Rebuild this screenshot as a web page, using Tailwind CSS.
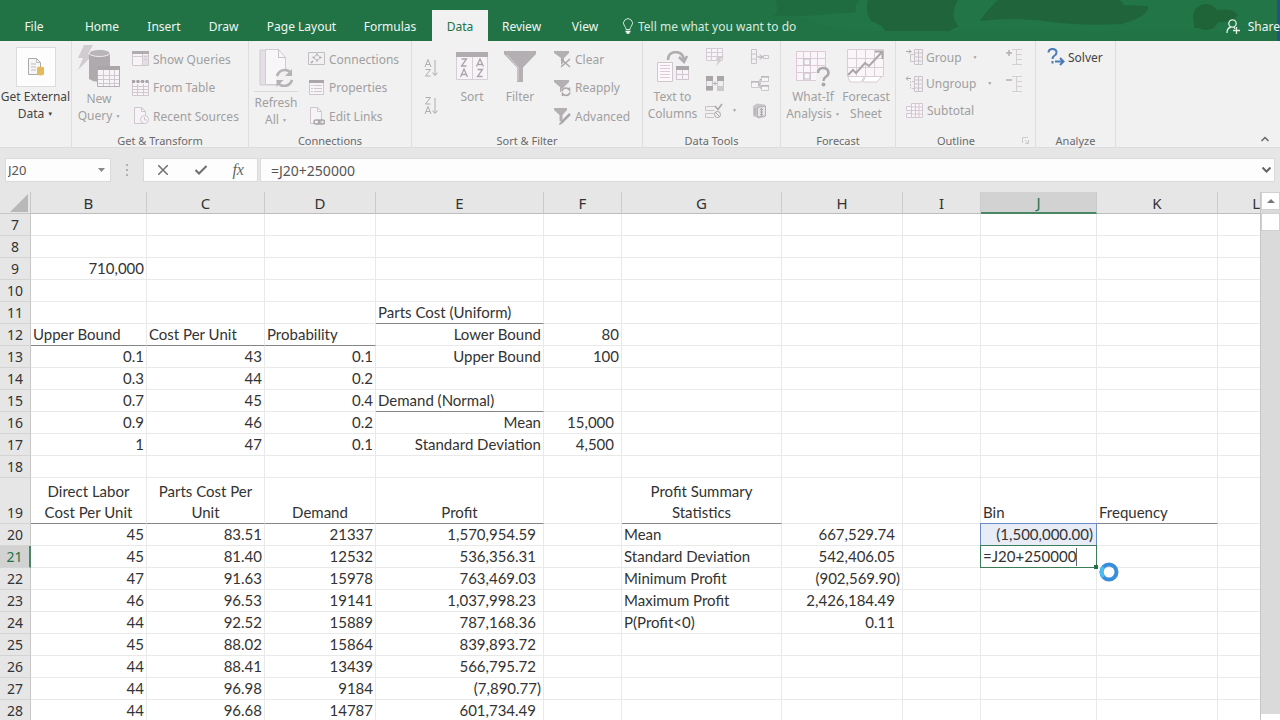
<!DOCTYPE html>
<html lang="en">
<head>
    <meta charset="UTF-8">
    <meta name="viewport" content="width=device-width, initial-scale=1.0">
    <title>Profit Simulation - Excel</title>
    <script src="https://cdn.jsdelivr.net/npm/@tailwindcss/browser@4"></script>
    <style>
        body { font-family: 'Noto Sans', sans-serif; }
        .sheet td { font-family: Lato, sans-serif; }
    </style>
</head>
<body class="h-screen overflow-hidden flex flex-col bg-[#e6e6e6] text-[#444]">

    <!-- Tab strip -->
    <header class="relative h-[41px] shrink-0 bg-[#217346] text-[#f0f6f2] text-xs">
        <svg class="absolute top-0 right-0 h-[41px] w-[520px]" viewBox="0 0 520 41">
            <path d="M20 0h497v31H90Q30 20 20 0z" fill="#227547"/>
            <path d="M15 0h85q-6 6-4 12-8 2-18 1-30 4-64 3 6-6 1-16z" fill="#206c41"/>
            <path d="M108 0h90l-3 6q-4 14 4 20l-10 5h-64q-2-6-14-10-6-8-3-21z" fill="#1f643b"/>
            <path d="M238 0h122l4 5 24 1q2 10-26 18-32 2-62-1-40-7-80-2 6-10 18-21z" fill="#1f643b"/>
            <circle cx="446" cy="17" r="13" fill="#1f6439"/>
            <path d="M458 10q14-2 20 5l-6 7h-14zM434 20h8v8h-8z" fill="#1f6439"/>
            <path d="M517 0h3v41h-3z" fill="#24508c"/>
        </svg>
        <nav class="relative flex h-full items-end leading-[31px]">
            <button class="w-[68px] h-[31px] pt-px">File</button>
            <button class="w-[68px] h-[31px] pt-px">Home</button>
            <button class="w-14 h-[31px] pt-px">Insert</button>
            <button class="w-[63px] h-[31px] pt-px">Draw</button>
            <button class="w-[93px] h-[31px] pt-px">Page Layout</button>
            <button class="w-[84px] h-[31px] pt-px">Formulas</button>
            <button class="w-[56px] h-[31px] pt-px bg-[#f1f1f1] text-[#217346]">Data</button>
            <button class="w-[67px] h-[31px] pt-px">Review</button>
            <button class="w-[60px] h-[31px] pt-px">View</button>
            <button class="h-[31px] pl-[7px] pt-px flex items-center gap-1 text-[#d6ebde]">
                <svg class="w-3 h-4" viewBox="0 0 12 16" fill="none" stroke="#cfe5d8"><path d="M4 11.500q0-2-1.500-3.500a4.500 4.500 0 1 1 7 0Q8 9.500 8 11.500z"/><path d="M3.500 13.500h5M4.500 15h3" stroke="#fff" stroke-width="1.500"/></svg>
                Tell me what you want to do
            </button>
            <button class="h-[31px] ml-auto pt-px flex items-center gap-2 whitespace-nowrap">
                <svg class="w-[14px] h-[15px]" viewBox="0 0 14 15" fill="none" stroke="#e4f0e9" stroke-width="1.300"><circle cx="6.500" cy="4.500" r="3.700"/><path d="M1 14q0-5 4-6M8 8l1 2M7 11.500h7M10.500 8v7"/></svg>
                Share
            </button>
        </nav>
    </header>

    <!-- Ribbon -->
    <section class="h-[107px] shrink-0 bg-[#f1f1f1] flex text-xs leading-[17px] text-[#a0a0a0] border-b border-[#dcdcdc]">
        <div class="w-[72px] border-r border-[#e0dde0] flex flex-col">
            <button class="text-[#444] whitespace-nowrap pt-1.5 flex flex-col items-center">
                <span class="w-10 h-10 bg-[#fdfdfd] border border-[#dcdcdc] flex items-center justify-center">
                    <svg class="w-4 h-[18px]" viewBox="0 0 16 18"><path d="M.5.500h8l4 4v12H.5z" fill="#f6f6f6" stroke="#aaa"/><path d="M8.500.500v4h4M3 6h5M3 9h5M3 12h5" fill="none" stroke="#bbb"/><path d="M9 9.500q3.500-2 7 0v7q-3.500 2-7 0z" fill="#e6b95f"/></svg>
                </span>
                <span class="pt-px">Get External<br>Data <small class="text-[6px] align-middle">▼</small></span>
            </button>
        </div>

        <div class="w-[177px] border-r border-[#e0dde0] flex flex-col">
            <div class="flex h-[92px] pl-1">
                <button class="w-[46px] flex flex-col items-center pt-1">
                    <svg class="w-[42px] h-[42px]" viewBox="0 0 42 42">
                        <path d="M6 0h9l-5 9h6L0 25l5-12H0z" fill="#d0ccd0"/>
                        <path d="M11 8v26q4 3 12 3V21h9V8z" fill="#aeaaae"/>
                        <ellipse cx="21.500" cy="8" rx="10.500" ry="3.500" fill="#b8b4b8" stroke="#efefef"/>
                        <path d="M19.500 21.500h22v20h-22z" fill="#f7f4f7" stroke="#b5b0b5"/><path d="M19 21h23v4H19z" fill="#aaa6aa"/><path d="M20 30.500h21M20 34.500h21M20 38.500h21M25.500 25v16M31.500 25v16M36.500 25v16" stroke="#cfc6ce"/>
                    </svg>
                    <span class="pt-[3px]">New<br>Query&nbsp;<small class="text-[5px] align-middle">▼</small></span>
                </button>
                <div class="flex flex-col pl-[10px] pt-1 whitespace-nowrap">
                    <button class="h-7 flex items-center gap-1">
                        <svg class="w-[17px] h-4" viewBox="0 0 17 16"><path d="M.5.500h16v14H.5z" fill="#f7f4f7" stroke="#cfc6ce"/><path d="M0 0h17v3H0z" fill="#b0acb0"/><path d="M11 4h5v10h-5z" fill="#e4dfe4"/><path d="M12 5.500h3M12 8.500h3M10.500 3v11M1 5.500h9" stroke="#d3cad2"/></svg>
                        Show Queries
                    </button>
                    <button class="h-[29px] flex items-center gap-1">
                        <svg class="w-[17px] h-4" viewBox="0 0 17 16"><path d="M.5 1.500h16v14H.5z" fill="#f7f4f7" stroke="#cfc6ce"/><path d="M0 1.500h17" stroke="#aaa6aa" stroke-width="3" stroke-dasharray="3 1.500"/><path d="M1 6.500h15M1 9.500h15M1 12.500h15M5.500 4v11M11.500 4v11" stroke="#cfc6ce"/></svg>
                        From Table
                    </button>
                    <button class="h-7 flex items-center gap-1">
                        <svg class="w-[17px] h-[18px]" viewBox="0 0 17 18" fill="#f7f4f7" stroke="#cfc6ce"><path d="M2.500.500h7l4 4v12h-11zM9.500.500v4h4"/><circle cx="12.500" cy="12.500" r="4"/><path d="M12.500 10v3h2.500" fill="none"/></svg>
                        Recent Sources
                    </button>
                </div>
            </div>
            <div class="h-3.5 text-center text-[11px] leading-[15px] text-[#6a6a6a]">Get &amp; Transform</div>
        </div>

        <div class="w-[163px] border-r border-[#e0dde0] flex flex-col">
            <div class="flex h-[92px] pl-1">
                <button class="w-[46px] flex flex-col items-center pt-2">
                    <svg class="w-[34px] h-[38px]" viewBox="0 0 34 38">
                        <path d="M1 1h18v35H1z" fill="#e4dfe4" stroke="#d3cad2"/><path d="M6.500.500h13l7 8v27h-20z" fill="#f8f6f8" stroke="#d3cad2"/><path d="M19.500.500v8h7" fill="none" stroke="#c9c0c8"/>
                        <circle cx="25.500" cy="29" r="9" fill="#f1f1f1"/>
                        <path d="M18 27q2-6 8-6 4 0 6 3.500M33 31q-2 6-8 6-4 0-6-3.500" fill="none" stroke="#b5b1b5" stroke-width="2.500"/><path d="M33 20v7h-7zM17.500 38v-7h7z" fill="#b5b1b5"/>
                    </svg>
                    <span class="mt-1 border-t border-[#dcd8dc] pt-0.5">Refresh<br>All <small class="text-[5px] align-middle">▼</small></span>
                </button>
                <div class="flex flex-col pl-[9px] pt-1 whitespace-nowrap">
                    <button class="h-7 flex items-center gap-1">
                        <svg class="w-[17px] h-4" viewBox="0 0 17 16" fill="none" stroke="#c4bdc3"><path d="M.5 1.500h16v12H.5z"/><circle cx="9" cy="6.500" r="2.500"/><path d="M9 2.500V4M9 9v1.500M4.500 6.500h2M11.500 6.500h2M3 12l2-2" stroke="#aaa6aa" stroke-width="1.500"/></svg>
                        Connections
                    </button>
                    <button class="h-[29px] flex items-center gap-1">
                        <svg class="w-[17px] h-4" viewBox="0 0 17 16"><path d="M1.500.500h14v14h-14z" fill="#f7f4f7" stroke="#cfc6ce"/><path d="M1 0h15v3H1z" fill="#aaa6aa"/><path d="M3 5.500h2M6 5.500h8M3 8.500h2M6 8.500h8M3 11.500h2M6 11.500h8" stroke="#cfc6ce"/></svg>
                        Properties
                    </button>
                    <button class="h-7 flex items-center gap-1">
                        <svg class="w-[17px] h-[18px]" viewBox="0 0 17 18" fill="none" stroke="#cfc6ce"><path d="M2.500.500h7l4 4v12h-11z" fill="#f7f4f7"/><path d="M9.500.500v4h4"/><g stroke="#aaa6aa" stroke-width="1.500"><rect x="6" y="13" width="6" height="4" rx="2"/><rect x="10.500" y="13" width="6" height="4" rx="2"/></g></svg>
                        Edit Links
                    </button>
                </div>
            </div>
            <div class="h-3.5 text-center text-[11px] leading-[15px] text-[#6a6a6a]">Connections</div>
        </div>

        <div class="w-[231px] border-r border-[#e0dde0] flex flex-col">
            <div class="flex h-[92px] pl-2.5">
                <div class="w-[18px] flex flex-col items-center pt-[18px] gap-5">
                    <button aria-label="Sort A to Z"><svg class="w-[14px] h-[18px]" viewBox="0 0 14 18" fill="none" stroke="#b0acb0"><path d="M1 8l3-7.500L7 8M2 5.500h4M1.500 10.500h5l-5 6.500h5M11 1v15M8.500 13.500l2.500 3 2.500-3"/></svg></button>
                    <button aria-label="Sort Z to A"><svg class="w-[14px] h-[18px]" viewBox="0 0 14 18" fill="none" stroke="#b0acb0"><path d="M1.500.500h5l-5 6.500h5M1 17l3-7.500L7 17M2 14.500h4M11 1v15M8.500 13.500l2.500 3 2.500-3"/></svg></button>
                </div>
                <button class="w-[48px] ml-2 flex flex-col items-center pt-2.5">
                    <svg class="w-8 h-8" viewBox="0 0 32 32"><path d="M.5 1.500h31v27H.5z" fill="#f7f4f7" stroke="#d6cdd5"/><path d="M0 1h32v5H0z" fill="#b0acb0"/><path d="M16.500 6v22" stroke="#d6cdd5"/><path d="M5.500 8h5l-5 7h5M4.500 26l3.500-8 3.500 8M6 23.500h4.500M20.500 15.500L24 8l3.500 7.500M22 13.500h4.500M21.500 18.500h5l-5 7h5" fill="none" stroke="#aaa4aa" stroke-width="1.300"/></svg>
                    <span class="pt-[5px]">Sort</span>
                </button>
                <button class="w-[48px] flex flex-col items-center pt-2.5">
                    <svg class="w-8 h-8" viewBox="0 0 32 32"><path d="M0 0h32v3L19 16.500V31h-6V16.500L0 3z" fill="#b3afb3"/><path d="M3 4l11 12v14" fill="none" stroke="#d5d2d5"/></svg>
                    <span class="pt-[5px]">Filter</span>
                </button>
                <div class="flex flex-col pl-[10px] pt-1 whitespace-nowrap">
                    <button class="h-7 flex items-center gap-1">
                        <svg class="w-[17px] h-[18px]" viewBox="0 0 17 18"><path d="M0 1h15v2l-5 5v4l-3 3V8L0 3z" fill="#b3afb3"/><path d="M7 9l9 8M16 9l-9 8" stroke="#aaa6aa" stroke-width="1.500"/></svg>
                        Clear
                    </button>
                    <button class="h-[29px] flex items-center gap-1">
                        <svg class="w-[17px] h-[18px]" viewBox="0 0 17 18"><path d="M0 1h15v2l-5 5v5H6V8L0 3z" fill="#b3afb3"/><circle cx="12" cy="13" r="5" fill="#f1f1f1"/><path d="M8 12q1-3 4-3 2 0 3.500 2V8.500M16 13.500q-1 3-4 3-2 0-3.500-2V17" fill="none" stroke="#aaa6aa" stroke-width="1.500"/></svg>
                        Reapply
                    </button>
                    <button class="h-7 flex items-center gap-1">
                        <svg class="w-[17px] h-[18px]" viewBox="0 0 17 18"><path d="M0 1h13v2L8.500 8v6h-3V8L0 3z" fill="#b3afb3"/><path d="M16 7l-9 9" stroke="#aaa6aa" stroke-width="2.500"/><path d="M5 18l1-3 2 2z" fill="#aaa6aa"/></svg>
                        Advanced
                    </button>
                </div>
            </div>
            <div class="h-3.5 text-center text-[11px] leading-[15px] text-[#6a6a6a]">Sort &amp; Filter</div>
        </div>

        <div class="w-[138px] border-r border-[#e0dde0] flex flex-col">
            <div class="flex h-[92px]">
                <button class="w-[59px] flex flex-col items-center pt-2.5">
                    <svg class="w-8 h-8" viewBox="0 0 32 32"><path d="M11 9q0-7 7-8 8 0 9 8M22 6l5 5 3-6" fill="none" stroke="#b0acb0" stroke-width="2.500"/><path d="M.5 11.500h15v19H.5z" fill="#fbf7fa" stroke="#cfc6ce"/><path d="M3 14.500h10M3 17.500h10M3 20.500h10M3 23.500h10M3 26.500h10" stroke="#dccbd7"/><path d="M19.500 15.500h12v13h-12z" fill="#f7f4f7" stroke="#cfc6ce"/><path d="M19 15h13v4H19z" fill="#aaa6aa"/><path d="M20 23.500h11M25.500 19v9" stroke="#cfc6ce"/></svg>
                    <span class="pt-[5px]">Text to<br>Columns</span>
                </button>
                <div class="flex flex-col pl-[3px] pt-0.5">
                    <button aria-label="Flash Fill" class="h-[27px] w-9 flex items-center pl-px"><svg class="w-[18px] h-[18px]" viewBox="0 0 18 18"><path d="M.5.500h16v12H.5zM.5 4.500h16M.5 8.500h16M5.500.500v12M11.500.500v12" fill="#f7f4f7" stroke="#d6cbd4"/><path d="M11 8h7l-4 4h2l-6 6 2-5h-2z" fill="#d0ccd0"/></svg></button>
                    <button aria-label="Remove Duplicates" class="h-[27px] w-9 flex items-center pl-px"><svg class="w-[18px] h-[16px]" viewBox="0 0 18 16"><path d="M.5.500h6v14h-6zM11.500.500h6v14h-6z" fill="#eee" stroke="#c9c5c9"/><path d="M0 0h7v5H0zM0 10h7v4H0zM11 0h7v5h-7z" fill="#a9a5a9"/><path d="M7 7.500h4M9 5.500v4" stroke="#b0acb0"/><path d="M11 10h7v4h-7z" fill="#ccc8cc"/></svg></button>
                    <button aria-label="Data Validation" class="h-[27px] w-9 flex items-center gap-[9px]"><svg class="w-[18px] h-[16px]" viewBox="0 0 18 16" fill="none" stroke="#c9c4c9"><path d="M10 3.500H.5v4h9M9 10.500H.5v4H9"/><path d="M10 3l3 3.500L17 1" stroke="#aaa6aa" stroke-width="1.500"/><circle cx="12.500" cy="11.500" r="3" stroke="#aaa6aa"/><path d="M10.500 9.500l4 4" stroke="#aaa6aa"/></svg><small class="text-[5px]">▼</small></button>
                </div>
                <div class="flex flex-col pl-[10px] pt-0.5">
                    <button aria-label="Consolidate" class="h-[27px] flex items-center"><svg class="w-[18px] h-[16px]" viewBox="0 0 18 16" fill="none" stroke="#c9c4c9"><path d="M.5.500h5v14h-5zM.5 5h5M.5 10h5M12.500 6.500h5v3h-5z"/><path d="M6.500 8h5M9 5.500L11.500 8 9 10.500" stroke="#aaa6aa"/></svg></button>
                    <button aria-label="Relationships" class="h-[27px] flex items-center"><svg class="w-[18px] h-[16px]" viewBox="0 0 18 16" fill="#f7f4f7" stroke="#cdc8cd"><path d="M.5 5.500h7v6h-7zM10.500.500h7v5h-7zM10.500 9.500h7v5h-7z"/><path d="M0 6h8M10 1h8M10 10h8M7.500 8.500H9v-5h1M9 8.500V12h1" stroke="#aba7ab"/></svg></button>
                    <button aria-label="Manage Data Model" class="h-[27px] flex items-center"><svg class="w-[18px] h-[16px]" viewBox="0 0 18 16"><path d="M2 3l4-2.500 8 1V14l-6 1.500L2 13z" fill="#c9c5c9"/><path d="M6.500 4.500l8-1.500v10l-8 1z" fill="#e8e6e8" stroke="#b3afb3"/><path d="M9 6.500h3M9 9h3M9 11.500h3M10.500 5v8M4 5v7" stroke="#aaa6aa"/></svg></button>
                </div>
            </div>
            <div class="h-3.5 text-center text-[11px] leading-[15px] text-[#6a6a6a]">Data Tools</div>
        </div>

        <div class="w-[115px] border-r border-[#e0dde0] flex flex-col">
            <div class="flex h-[92px] whitespace-nowrap">
                <button class="w-[64px] flex flex-col items-center pt-2.5">
                    <svg class="w-[34px] h-9" viewBox="0 0 34 36"><path d="M.5.500h29v29H.5zM.5 7.500h29M.5 14.500h29M.5 21.500h29M7.500.500v29M14.500.500v29M21.500.500v29" fill="#f9f5f8" stroke="#dccbd7"/><path d="M8 8h6v6H8zM8 22h6v6H8z" fill="none" stroke="#c4bdc3"/><path d="M20 17h14v19H20z" fill="#f1f1f1"/><path d="M22 22q0-5 5-5t5.500 4.500q0 3-3 4.500-2 1.500-2 4" fill="none" stroke="#aaa6aa" stroke-width="2.500"/><circle cx="27.500" cy="33.500" r="2" fill="#aaa6aa"/></svg>
                    <span class="pt-px">What-If<br>Analysis&nbsp;<small class="text-[5px] align-middle">▼</small></span>
                </button>
                <button class="w-[42px] flex flex-col items-center pt-2">
                    <svg class="w-[38px] h-[34px]" viewBox="0 0 38 34"><path d="M.5.500h36v27H.5zM.5 9.500h36M.5 18.500h36M9.500.500v27M18.500.500v27M27.500.500v27" fill="#f9f5f8" stroke="#d8ced6"/><path d="M1 26l5-5 3 3 9-10 4 3L35 3M28 2.500h7.500V10" fill="none" stroke="#aaa6aa" stroke-width="2"/><path d="M1 28l2 5h11l3-5M18 28l-2 5h14l4-5" fill="#fff" stroke="#d6cdd5"/></svg>
                    <span class="pt-[5px]">Forecast<br>Sheet</span>
                </button>
            </div>
            <div class="h-3.5 text-center text-[11px] leading-[15px] text-[#6a6a6a]">Forecast</div>
        </div>

        <div class="w-[140px] border-r border-[#e0dde0] flex flex-col">
            <div class="flex justify-between h-[92px] pl-2.5 pr-3 pt-[3px] whitespace-nowrap">
                <div class="flex flex-col">
                    <button class="h-[26px] flex items-center gap-[3px]">
                        <svg class="w-[17px] h-[16px]" viewBox="0 0 17 16" fill="none" stroke="#cbc5cb"><path d="M8.500.500h8v15h-8zM12.500.500v15M8.500 4h8M8.500 8h8M8.500 12h8M8 5.500H4.500v7H8"/><path d="M0 2.500h5M3 .500l2 2-2 2" stroke="#aaa6aa"/></svg>
                        Group <small class="text-[5px] pl-2">▼</small>
                    </button>
                    <button class="h-[27px] flex items-center gap-[3px]">
                        <svg class="w-[17px] h-[16px]" viewBox="0 0 17 16" fill="none" stroke="#cbc5cb"><path d="M8.500.500h8v15h-8zM12.500.500v15M8.500 4h8M8.500 8h8M8.500 12h8"/><path d="M8 5.500H4.500v7H8" stroke-dasharray="2 1"/><path d="M0 2.500h5M2 .500l-2 2 2 2" stroke="#aaa6aa"/></svg>
                        Ungroup <small class="text-[5px] pl-2">▼</small>
                    </button>
                    <button class="h-[27px] flex items-center gap-1">
                        <svg class="w-[17px] h-[16px]" viewBox="0 0 17 16" fill="#f9f5f8" stroke="#d3c8d1"><path d="M5.500.500h11v14h-11zM9.500.500v14M13 .500v14M5.500 4h11M5.500 7.500h11M5.500 11h11M5 3.500H.5v4H5M5 10.500H.5v4H5"/></svg>
                        Subtotal
                    </button>
                </div>
                <div class="flex flex-col">
                    <button aria-label="Show Detail" class="h-[26px] flex items-center"><svg class="w-[17px] h-[16px]" viewBox="0 0 17 16" fill="none" stroke="#d3cfd3"><path d="M6 .500h10M10 5.500h6M10 10.500h6M6 15.500h10M10.500.500v15"/><path d="M0 4h6M3 1v6" stroke="#b3afb3" stroke-width="1.500"/></svg></button>
                    <button aria-label="Hide Detail" class="h-[27px] flex items-center"><svg class="w-[17px] h-[16px]" viewBox="0 0 17 16" fill="none" stroke="#d3cfd3"><path d="M6 .500h10M10 5.500h6M10 10.500h6M6 15.500h10M10.500.500v15"/><path d="M0 4h6" stroke="#b3afb3" stroke-width="1.500"/></svg></button>
                </div>
            </div>
            <div class="h-3.5 flex items-center text-[11px] leading-[15px] text-[#6a6a6a]">
                <span class="w-[120px] text-center">Outline</span>
                <button aria-label="Outline settings" class="ml-1.5"><svg class="w-[7px] h-[7px]" viewBox="0 0 7 7" fill="none" stroke="#ccc"><path d="M.5 6V.500H6M3 3l3 3M6.500 3v3.500H3"/></svg></button>
            </div>
        </div>

        <div class="w-[80px] border-r border-[#e0dde0] flex flex-col">
            <div class="h-[92px] pl-[11px] pt-[3px]">
                <button class="h-[26px] flex items-center gap-[3px] text-[#444]">
                    <svg class="w-[18px] h-[18px]" viewBox="0 0 18 18" fill="none" stroke="#4a7ab8" stroke-width="2"><path d="M1.500 4.500q0-3.500 4-3.500t4 3.500q0 2-2.500 3.500-1.500 1-1.500 3M5.500 13v2.500"/><path d="M8 13.500h8M13 10l3.500 3.500L13 17"/></svg>
                    Solver
                </button>
            </div>
            <div class="h-3.5 text-center text-[11px] leading-[15px] text-[#6a6a6a]">Analyze</div>
        </div>

        <button aria-label="Collapse the Ribbon" class="ml-auto mr-[11px] self-end pb-1"><svg class="w-2 h-2" viewBox="0 0 8 8" fill="none" stroke="#666" stroke-width="1.500"><path d="M.5 6L4 2.500 7.500 6"/></svg></button>
    </section>

    <!-- Formula bar -->
    <section class="h-11 shrink-0 flex items-center pl-[5px] text-sm">
        <div class="relative">
            <input aria-label="Name Box" value="J20" class="block w-[106px] h-6 bg-[#fdfdfd] border border-[#dadada] px-0.5 text-[13px] text-[#555]">
            <svg class="absolute right-1.5 top-2.5 w-[7px] h-1" viewBox="0 0 7 4"><path d="M0 0h7L3.500 4z" fill="#888"/></svg>
        </div>
        <svg class="w-1 h-3 mx-3.5" viewBox="0 0 4 12" fill="#b0b0b0"><path d="M1 0h2v2H1zM1 5h2v2H1zM1 10h2v2H1z"/></svg>
        <div class="flex w-[115px] h-6 bg-[#fdfdfd] border border-[#dadada]">
            <button aria-label="Cancel" class="flex-1 flex items-center justify-center"><svg class="w-[10px] h-[10px]" viewBox="0 0 10 10" stroke="#707070" stroke-width="1.500"><path d="M0 0l10 10M10 0L0 10"/></svg></button>
            <button aria-label="Enter" class="flex-1 flex items-center justify-center"><svg class="w-3 h-[10px]" viewBox="0 0 12 10" fill="none" stroke="#707070" stroke-width="2"><path d="M.5 5L4 8.500 11.500 1"/></svg></button>
            <button aria-label="Insert Function" class="flex-1 italic text-base leading-none text-[#666] font-['Liberation_Serif',serif]">fx</button>
        </div>
        <div class="relative ml-0.5 mr-[5px] flex-1">
            <input aria-label="Formula Bar" value="=J20+250000" class="block w-full h-6 bg-[#fdfdfd] border border-[#dadada] px-2.5 text-[#555]">
            <svg class="absolute right-1 top-[9px] w-[9px] h-[6px]" viewBox="0 0 9 6" fill="none" stroke="#666" stroke-width="2"><path d="M.5.500l4 4 4-4"/></svg>
        </div>
    </section>

    <!-- Worksheet -->
    <main class="flex-1 min-h-0 flex">
        <div class="sheet flex-1 min-w-0 overflow-hidden bg-white text-[15px] leading-[22px] text-[#333]">
            <table class="w-full table-fixed border-separate border-spacing-0">
                <colgroup>
                    <col class="w-[31px]"><col class="w-[116px]"><col class="w-[118px]"><col class="w-[111px]"><col class="w-[168px]"><col class="w-[78px]"><col class="w-[160px]"><col class="w-[121px]"><col class="w-[78px]"><col class="w-[116px]"><col class="w-[121px]"><col>
                </colgroup>
                <thead><tr id="columns" class="h-[22px]"></tr></thead>
                <tbody id="rows"></tbody>
            </table>
        </div>
        <div class="w-5 shrink-0 bg-[#dadada] border-l border-[#c6c6c6] flex flex-col">
            <button aria-label="Scroll up" class="h-[18px] bg-white border border-[#d0d0d0] flex items-center justify-center"><svg class="w-2 h-1" viewBox="0 0 8 4"><path d="M0 4h8L4 0z" fill="#777"/></svg></button>
            <div class="mt-[3px] h-[18px] bg-white border border-[#d0d0d0]"></div>
            <button aria-label="Scroll down" class="mt-auto h-1.5 bg-white"></button>
        </div>
    </main>

    <script>
        const letters = ['B', 'C', 'D', 'E', 'F', 'G', 'H', 'I', 'J', 'K', 'L'];

        // l = left, c = centre, r = right, n = number format that keeps room for a closing bracket
        const align = {
            l: 'text-left px-0.5',
            c: 'text-center px-0.5',
            r: 'text-right px-0.5',
            n: 'text-right pr-[7px]',
        };

        const cells = {
            B9: ['r', '710,000'],
            E11: ['l', 'Parts Cost (Uniform)'],
            B12: ['l', 'Upper Bound'], C12: ['l', 'Cost Per Unit'], D12: ['l', 'Probability'], E12: ['r', 'Lower Bound'], F12: ['r', '80'],
            B13: ['r', '0.1'], C13: ['r', '43'], D13: ['r', '0.1'], E13: ['r', 'Upper Bound'], F13: ['r', '100'],
            B14: ['r', '0.3'], C14: ['r', '44'], D14: ['r', '0.2'],
            B15: ['r', '0.7'], C15: ['r', '45'], D15: ['r', '0.4'], E15: ['l', 'Demand (Normal)'],
            B16: ['r', '0.9'], C16: ['r', '46'], D16: ['r', '0.2'], E16: ['r', 'Mean'], F16: ['n', '15,000'],
            B17: ['r', '1'], C17: ['r', '47'], D17: ['r', '0.1'], E17: ['r', 'Standard Deviation'], F17: ['n', '4,500'],
            B19: ['c', 'Direct Labor Cost Per Unit'], C19: ['c', 'Parts Cost Per Unit'], D19: ['c', 'Demand'], E19: ['c', 'Profit'],
            G19: ['c', 'Profit Summary<br>Statistics'], J19: ['l', 'Bin'], K19: ['l', 'Frequency'],
            G20: ['l', 'Mean'], H20: ['n', '667,529.74'], J20: ['r', '(1,500,000.00)'],
            G21: ['l', 'Standard Deviation'], H21: ['n', '542,406.05'], J21: ['l', '=J20+250000'],
            G22: ['l', 'Minimum Profit'], H22: ['r', '(902,569.90)'],
            G23: ['l', 'Maximum Profit'], H23: ['n', '2,426,184.49'],
            G24: ['l', 'P(Profit&lt;0)'], H24: ['n', '0.11'],
        };

        const trials = [
            ['45', '83.51', '21337', '1,570,954.59'],
            ['45', '81.40', '12532', '536,356.31'],
            ['47', '91.63', '15978', '763,469.03'],
            ['46', '96.53', '19141', '1,037,998.23'],
            ['44', '92.52', '15889', '787,168.36'],
            ['45', '88.02', '15864', '839,893.72'],
            ['44', '88.41', '13439', '566,795.72'],
            ['44', '96.98', '9184', '(7,890.77)'],
            ['44', '96.68', '14787', '601,734.49'],
        ];
        trials.forEach(([labor, parts, demand, profit], i) => {
            const row = 20 + i;
            cells['B' + row] = ['r', labor];
            cells['C' + row] = ['r', parts];
            cells['D' + row] = ['r', demand];
            cells['E' + row] = [profit.startsWith('(') ? 'r' : 'n', profit];
        });

        const underlined = ['E11', 'B12', 'C12', 'D12', 'E15', 'B19', 'C19', 'D19', 'E19', 'G19', 'J19', 'K19'];

        document.getElementById('columns').innerHTML =
            '<th class="bg-[#e6e6e6] border-r border-b border-[#c6c6c6] p-0"><svg class="ml-auto mr-0.5 w-[18px] h-[18px]" viewBox="0 0 18 18"><path d="M18 0v18H0z" fill="#b8b8b8"/></svg></th>' +
            letters.map(letter => {
                let look = 'bg-[#e6e6e6] border-r border-r-[#cbcbcb] border-b border-b-[#bdbdbd]';
                if (letter === 'J') look = 'bg-[#d2d2d2] text-[#217346] border-r border-r-[#cbcbcb] border-b-2 border-b-[#4a8566]';
                if (letter === 'L') look = 'bg-[#e6e6e6] border-b border-[#bdbdbd] text-right';
                return `<th scope="col" class="p-0 font-normal text-[15px] leading-[20px] ${look}">${letter}</th>`;
            }).join('');

        let html = '';
        for (let row = 7; row <= 28; row++) {
            const height = row === 19 ? 'h-[46px]' : 'h-[22px]';
            const head = row === 21 ? 'bg-[#d2d2d2] text-[#217346] border-r-2 border-r-[#4a8566]' : 'bg-[#e6e6e6] border-r border-r-[#c6c6c6]';
            html += `<tr class="${height}"><th scope="row" class="p-0 font-normal text-sm leading-[21px] text-center align-bottom border-b border-b-[#d4d4d4] ${head}">${row}</th>`;
            letters.forEach(letter => {
                const id = letter + row;
                const [kind, text] = cells[id] || ['l', ''];
                const line = underlined.includes(id) ? 'border-b-[#858585]' : 'border-b-[#e9e9e9]';
                let inner = text;
                if (id === 'J20') {
                    inner = `<div class="absolute -inset-px bg-[#e7ecf7] border border-[#6b8bcb] pr-[3px] leading-[21px]">${text}</div>`;
                }
                if (id === 'J21') {
                    inner = `<div class="absolute -inset-px bg-white border border-[#3c7d58] pl-0.5 leading-[21px] z-10 flex items-center">${text}<span class="w-px h-[18px] bg-[#666]"></span><i class="absolute -right-0.5 -bottom-0.5 size-1 bg-[#217346]"></i></div>
                        <svg class="absolute left-[118px] top-4 size-5 z-10" viewBox="0 0 20 20" fill="none" stroke-width="4"><circle cx="10" cy="10" r="7.500" stroke="#3a8ddb"/><path d="M4.500 15A7.500 7.500 0 0 1 4.500 5" stroke="#4cbcf0"/></svg>`;
                }
                const side = letter === 'L' ? '' : 'border-r border-r-[#e9e9e9]';
                html += `<td class="relative p-0 leading-[21px] align-bottom border-b ${line} ${side} ${align[kind]}">${inner}</td>`;
            });
            html += '</tr>';
        }
        document.getElementById('rows').innerHTML = html;
    </script>
</body>
</html>
